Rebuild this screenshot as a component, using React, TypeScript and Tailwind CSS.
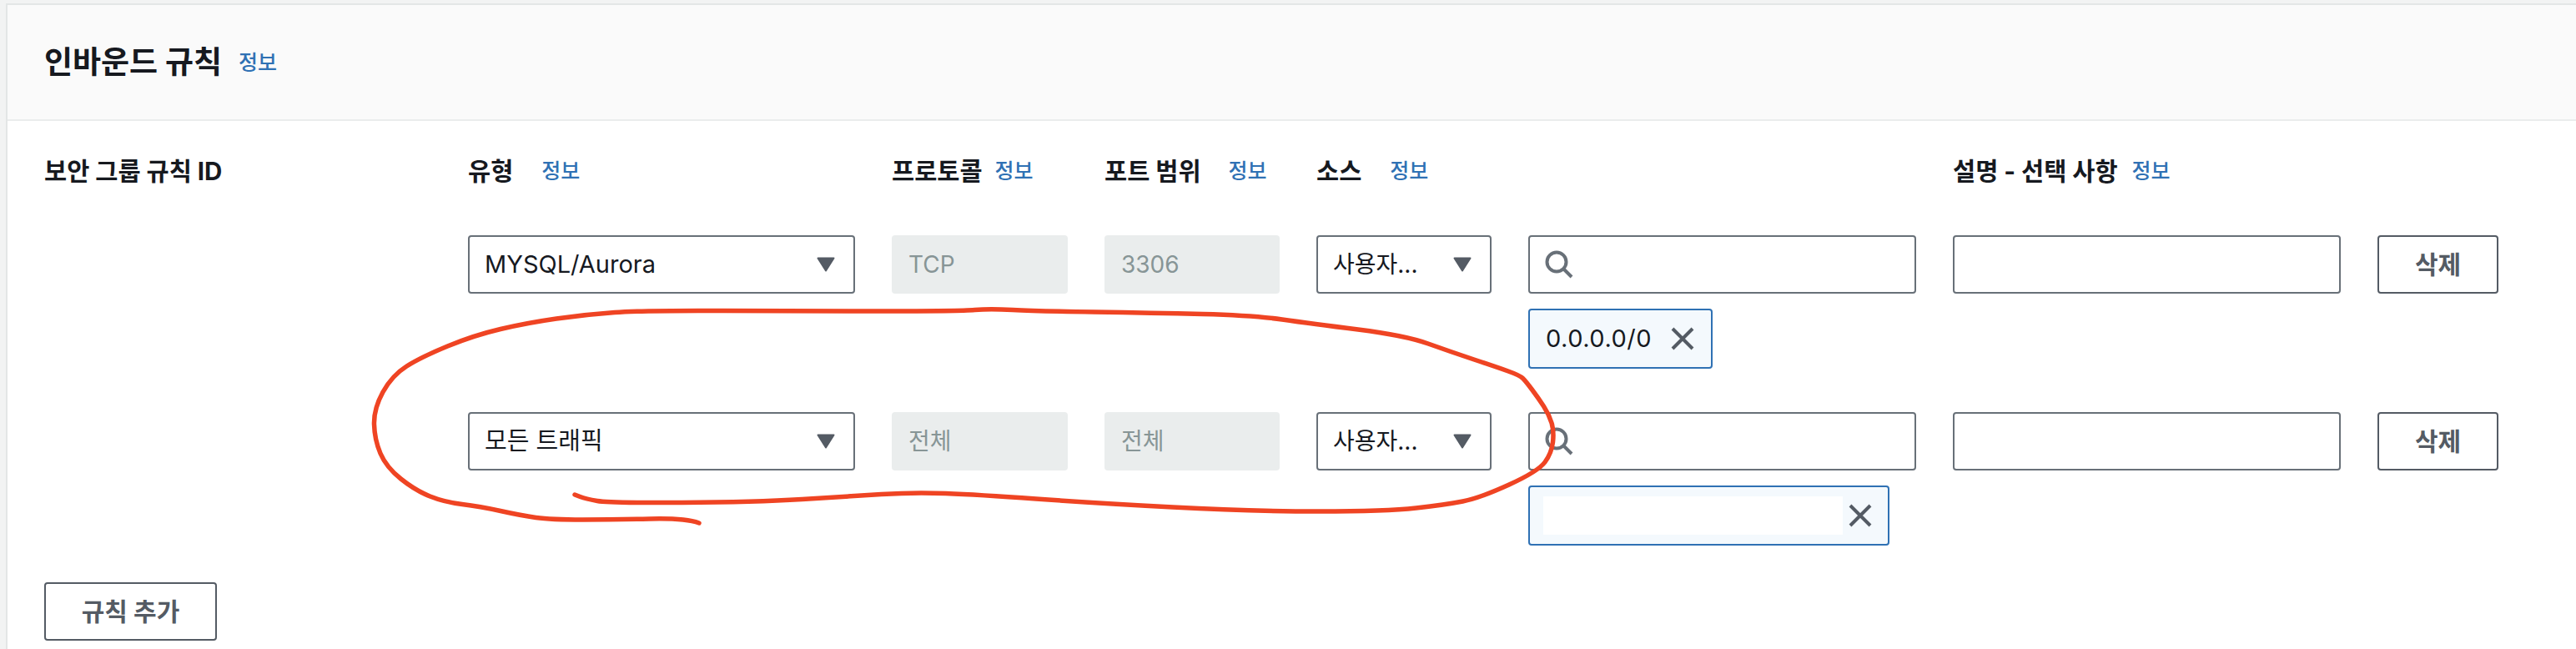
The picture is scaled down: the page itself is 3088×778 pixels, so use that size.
const FONT = "font-['Inter','Noto_Sans_CJK_KR',sans-serif]";
const COLS =
  "grid grid-cols-[464px_464px_211px_210px_210px_465px_465px_145px] gap-x-[44px] items-start";

// red hand drawn circle, coordinates are page pixels
const SCRIBBLE: [number, number][] = [
  [838, 627], [821, 621], [737, 623], [660, 623], [625, 618], [575, 607], [533, 602],
  [498, 588], [463, 560], [449, 527], [448, 490], [470, 450], [505, 428], [568, 402],
  [632, 387], [702, 377], [772, 372], [961, 373], [1151, 373], [1186, 370], [1242, 373],
  [1382, 375], [1502, 378], [1572, 388], [1684, 402], [1740, 422], [1794, 440], [1822, 450],
  [1829, 457], [1844, 477], [1857, 497], [1863, 517], [1860, 543], [1844, 565], [1774, 597],
  [1733, 605], [1662, 613], [1500, 613], [1312, 603], [1172, 593], [1095, 590], [1018, 595],
  [905, 602], [730, 603], [702, 598], [689, 593],
];

const smoothPath = (pts: [number, number][]) => {
  let d = `M${pts[0][0]} ${pts[0][1]}`;
  for (let i = 1; i < pts.length - 1; i++) {
    const mx = (pts[i][0] + pts[i + 1][0]) / 2;
    const my = (pts[i][1] + pts[i + 1][1]) / 2;
    d += ` Q${pts[i][0]} ${pts[i][1]} ${mx} ${my}`;
  }
  const last = pts[pts.length - 1];
  return `${d} L${last[0]} ${last[1]}`;
};

const Info = () => (
  <span className="text-[25px] leading-[36px] font-medium text-[#2f71b4]">정보</span>
);

const Caret = () => (
  <svg width="22" height="18" viewBox="0 0 22 18" className="shrink-0">
    <path d="M1.5 1.5 H20.5 L11 16.5 Z" fill="#545b64" stroke="#545b64" strokeWidth="2" strokeLinejoin="round" />
  </svg>
);

const Select = ({ value, small }: { value: string; small?: boolean }) => (
  <div
    className={`flex h-[70px] items-center justify-between rounded border-2 border-[#687078] bg-white pl-[18px] pr-[22px] text-[#16191f] ${
      small ? "text-[28px]" : "text-[29px]"
    }`}
  >
    <span className="whitespace-nowrap">{value}</span>
    <Caret />
  </div>
);

const Disabled = ({ value }: { value: string }) => (
  <div className="flex h-[70px] items-center rounded bg-[#eaeded] pl-[20px] text-[28px] text-[#879596]">
    {value}
  </div>
);

const Close = () => (
  <svg width="28" height="28" viewBox="0 0 28 28" className="shrink-0">
    <path d="M2 2 L26 26 M26 2 L2 26" stroke="#545b64" strokeWidth="4" fill="none" />
  </svg>
);

const SearchBox = () => (
  <div className="flex h-[70px] items-center rounded border-2 border-[#687078] bg-white pl-[18px]">
    <svg width="34" height="34" viewBox="0 0 34 34">
      <circle cx="14" cy="14" r="11.5" stroke="#687078" strokeWidth="4" fill="none" />
      <path d="M22.5 22.5 L32 32" stroke="#687078" strokeWidth="4" fill="none" />
    </svg>
  </div>
);

const Row = ({
  type,
  protocol,
  port,
  token,
}: {
  type: string;
  protocol: string;
  port: string;
  token?: string;
}) => (
  <div className={COLS}>
    <div />
    <Select value={type} />
    <Disabled value={protocol} />
    <Disabled value={port} />
    <Select value="사용자..." small />
    <div className="flex flex-col gap-[18px]">
      <SearchBox />
      {/* selected cidr, second one is painted over in the screenshot */}
      {token ? (
        <div className="flex h-[72px] w-[221px] items-center justify-between rounded border-2 border-[#2f71b4] bg-[#f4f9fd] pl-[19px] pr-[20px] text-[29px] tracking-[0.5px] text-[#16191f]">
          {token}
          <Close />
        </div>
      ) : (
        <div className="flex h-[72px] w-fit items-center gap-[7px] rounded border-2 border-[#2f71b4] bg-[#f4f9fd] pl-[16px] pr-[19px]">
          <div className="h-[46px] w-[359px] bg-white" />
          <Close />
        </div>
      )}
    </div>
    <div className="h-[70px] rounded border-2 border-[#687078] bg-white" />
    <button className="h-[70px] rounded border-2 border-[#545b64] bg-white text-[30px] font-bold text-[#545b64]">
      삭제
    </button>
  </div>
);

export default function App() {
  return (
    <div className={`relative h-[778px] w-full overflow-hidden bg-[#f2f3f3] pl-[7px] pt-1 ${FONT}`}>
      <div className="h-full border-l-2 border-t-2 border-[#e3e6e6] bg-white">
        {/* HEADER */}
        <div className="flex h-[139px] items-center gap-[20px] border-b-2 border-[#eaeded] bg-[#fafafa] pl-[44px]">
          <h2 className="text-[37px] font-bold text-[#16191f]">인바운드 규칙</h2>
          <Info />
        </div>

        <div className="pl-[44px] pt-[42px]">
          {/* COLUMN TITLES */}
          <div className={`${COLS} mb-[59px] text-[29.5px] leading-[36px] font-bold text-[#16191f]`}>
            <div>보안 그룹 규칙 ID</div>
            <div className="flex gap-[34px]">유형 <Info /></div>
            <div className="flex gap-[15px] whitespace-nowrap">프로토콜 <Info /></div>
            <div className="flex gap-[33px] whitespace-nowrap">포트 범위 <Info /></div>
            <div className="flex gap-[34px]">소스 <Info /></div>
            <div />
            <div className="flex gap-[17px] whitespace-nowrap">설명 - 선택 사항 <Info /></div>
            <div />
          </div>

          <Row type="MYSQL/Aurora" protocol="TCP" port="3306" token="0.0.0.0/0" />
          <div className="h-[52px]" />
          <Row type="모든 트래픽" protocol="전체" port="전체" />

          <button className="mt-[44px] h-[70px] w-[207px] rounded border-2 border-[#545b64] bg-white text-[30px] font-bold text-[#545b64]">
            규칙 추가
          </button>
        </div>
      </div>

      <svg className="pointer-events-none absolute left-0 top-0" width="3088" height="778" viewBox="0 0 3088 778">
        <path d={smoothPath(SCRIBBLE)} fill="none" stroke="#ef4423" strokeWidth="5.5" strokeLinecap="round" strokeLinejoin="round" />
      </svg>
    </div>
  );
}
